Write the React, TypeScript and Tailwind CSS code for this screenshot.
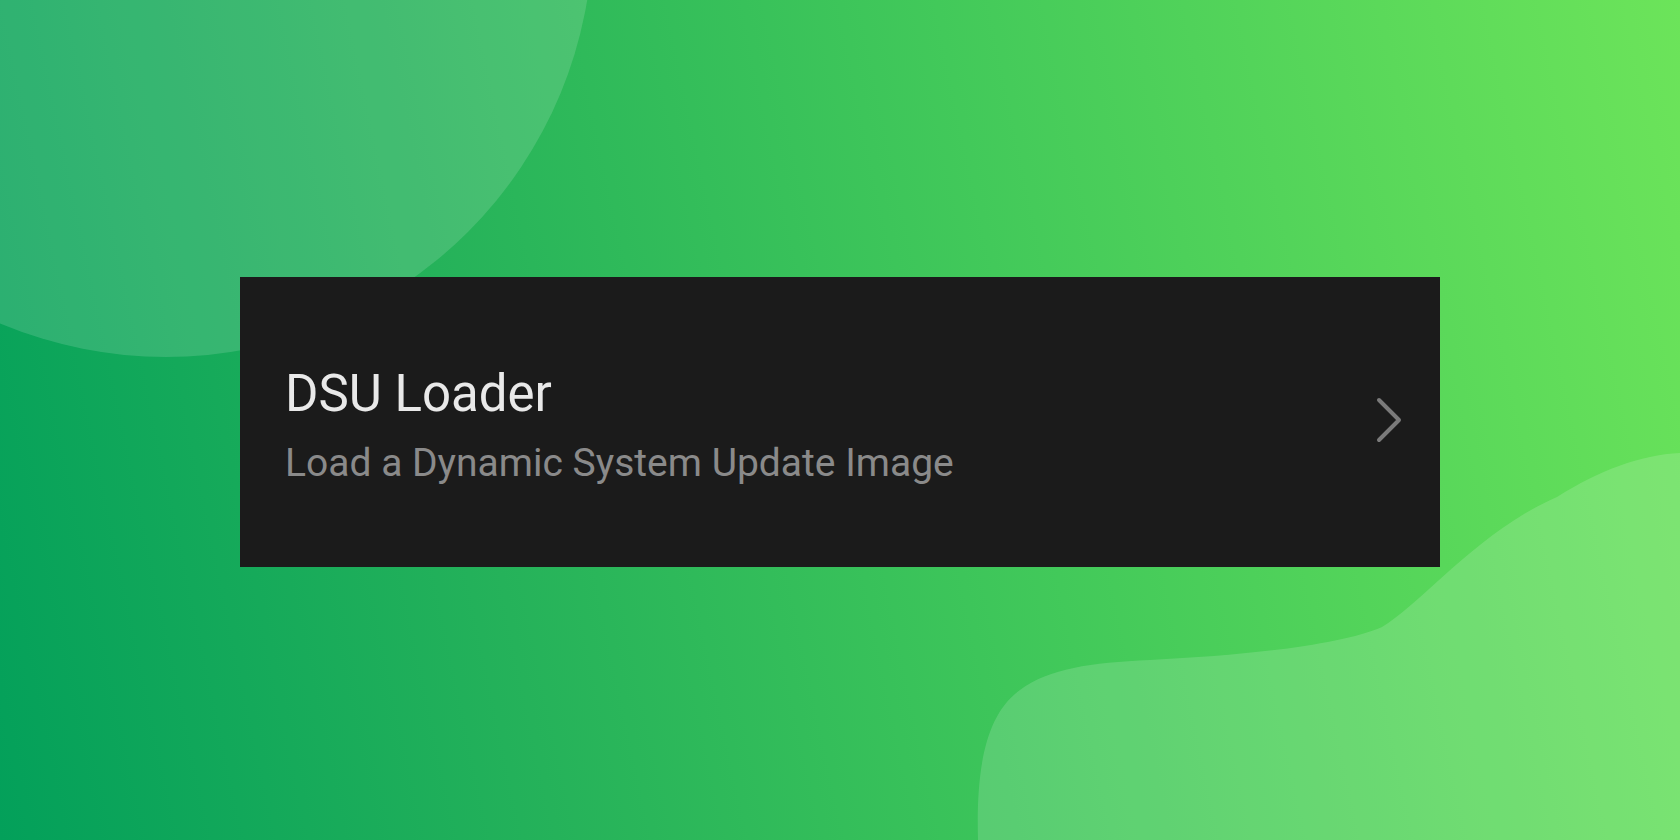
type SettingRowProps = {
  title: string;
  summary: string;
};

function ChevronRight() {
  return (
    <svg
      width="30"
      height="48"
      viewBox="0 0 30 48"
      fill="none"
      className="-mt-1 shrink-0"
    >
      <polyline
        points="5,4 25,24 5,44"
        stroke="#7a7a7a"
        strokeWidth="4"
        strokeLinecap="round"
        strokeLinejoin="round"
      />
    </svg>
  );
}

function SettingRow({ title, summary }: SettingRowProps) {
  return (
    <div className="relative flex h-[290px] w-[1200px] items-center justify-between bg-[#1b1b1b] pl-[45px] pr-[36px] font-['Roboto',sans-serif]">
      <div className="flex flex-col pt-[6px]">
        <div className="text-[51px] leading-[60px] text-[#e9e9e9]">{title}</div>
        <div className="mt-[16px] text-[39px] leading-[46px] text-[#8a8a8a]">
          {summary}
        </div>
      </div>
      <ChevronRight />
    </div>
  );
}

function Backdrop() {
  return (
    <svg
      className="absolute inset-0 h-full w-full"
      viewBox="0 0 1680 840"
      preserveAspectRatio="none"
    >
      <circle cx="166" cy="-70" r="427" fill="#ffffff" fillOpacity="0.14" />
      <path
        d="M978,840 C976,770 985,715 1020,690 C1050,668 1090,663 1150,660 C1250,655 1340,645 1382,627 C1420,605 1480,530 1557,497 C1600,470 1640,455 1680,453 L1680,840 Z"
        fill="#ffffff"
        fillOpacity="0.15"
      />
    </svg>
  );
}

export default function App() {
  return (
    <div className="relative flex h-[840px] w-full items-center justify-center overflow-hidden bg-[linear-gradient(78deg,#03a05a_0%,#25b25a_30%,#42c95a_60%,#6ce45a_100%)] pt-[4px]">
      <Backdrop />
      <SettingRow
        title="DSU Loader"
        summary="Load a Dynamic System Update Image"
      />
    </div>
  );
}
